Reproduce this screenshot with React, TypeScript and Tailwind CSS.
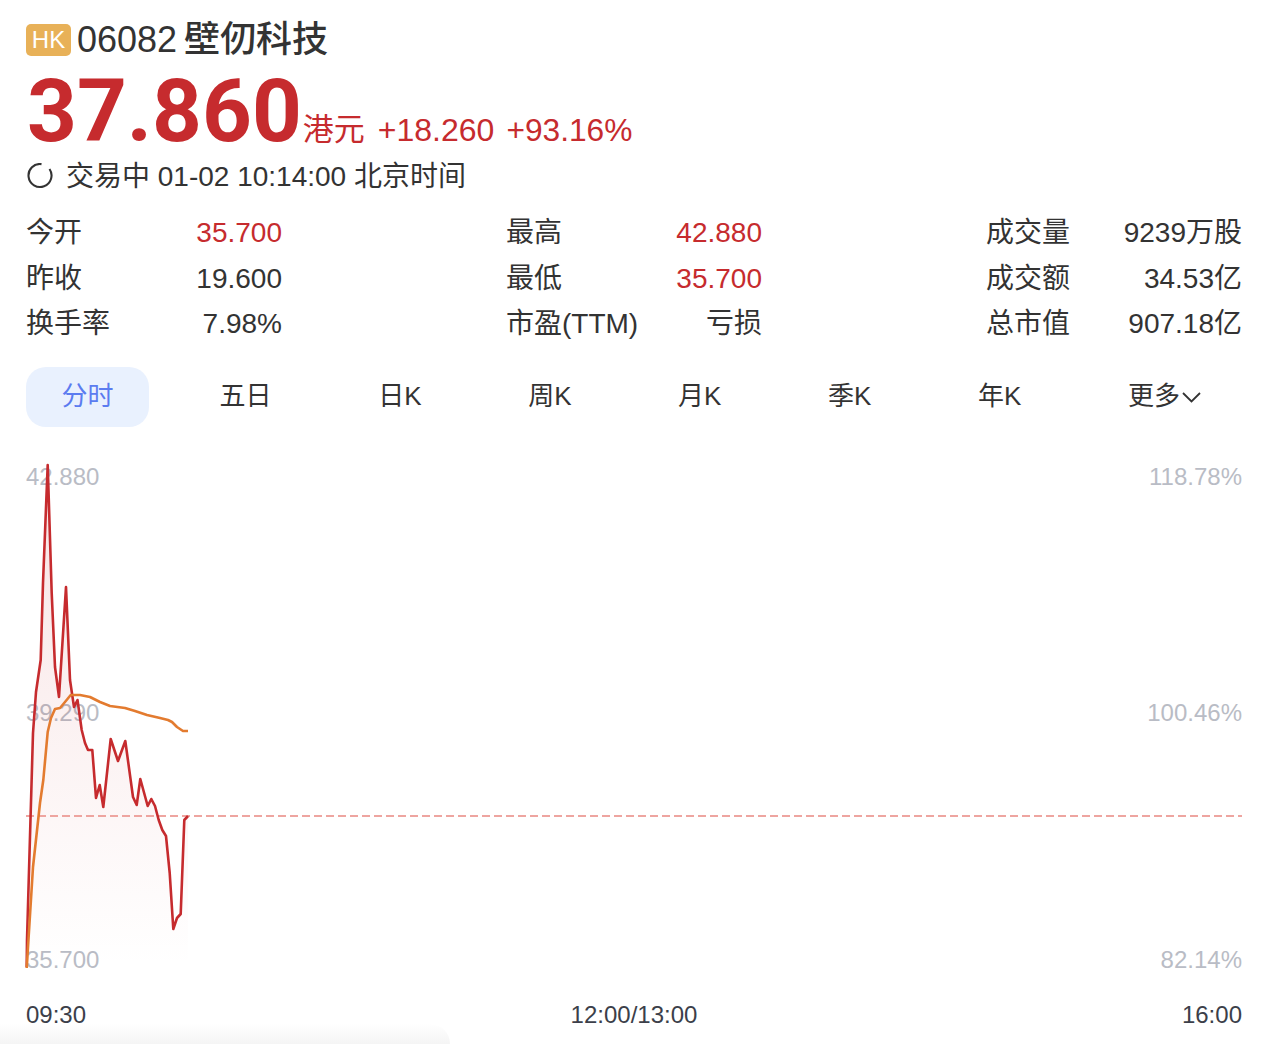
import React from 'react';

const FONT = "font-['Liberation_Sans','Noto_Sans_CJK_SC',sans-serif]";

const stats = [
  [
    { label: '今开', value: '35.700', color: 'text-[#c62b2e]' },
    { label: '昨收', value: '19.600', color: 'text-[#333333]' },
    { label: '换手率', value: '7.98%', color: 'text-[#333333]' },
  ],
  [
    { label: '最高', value: '42.880', color: 'text-[#c62b2e]' },
    { label: '最低', value: '35.700', color: 'text-[#c62b2e]' },
    { label: '市盈(TTM)', value: '亏损', color: 'text-[#333333]' },
  ],
  [
    { label: '成交量', value: '9239万股', color: 'text-[#333333]' },
    { label: '成交额', value: '34.53亿', color: 'text-[#333333]' },
    { label: '总市值', value: '907.18亿', color: 'text-[#333333]' },
  ],
];

const tabs = ['五日', '日K', '周K', '月K', '季K', '年K'];

const pricePoints =
  '26.7,967 27,940 33,733 36,692 40.7,660 43,583 47.7,465 51.7,593 55,667 59,697 66,587 70,680 74,707 77.5,700 81.7,730 85,743 88,750 92.3,750 96,798 99.7,785 103.3,807 110.7,739 118,761 125.3,741 133,797 136.7,805 140.3,779 147.7,806 151.3,799 155,806 158.7,820 162.3,830 166,836 169.7,873 173.3,929 177,918 180.7,914 184.3,820 188,816';

const avgPoints =
  '26.7,968 33,867 40,803 43.3,780 47.7,732 51,718 55,709 60,708 65,702 70.7,695 80,695 90,697 100,702 110,706 125,708 135,711 147,715 160,718 168,720 172,722 177,727 183,731 188,731';

const TimeChart = () => (
  <div className="relative mt-[33px] pl-[26px] pr-[28px]">
    <div className="flex justify-between text-[24px] leading-[34px] text-[#b9bcc5]">
      <span>42.880</span>
      <span>118.78%</span>
    </div>
    <div className="mt-[202px] flex justify-between text-[24px] leading-[34px] text-[#b9bcc5]">
      <span>39.290</span>
      <span>100.46%</span>
    </div>
    <div className="mt-[213px] flex justify-between text-[24px] leading-[34px] text-[#b9bcc5]">
      <span>35.700</span>
      <span>82.14%</span>
    </div>
    <svg className="absolute left-0 top-0" width="1270" height="520" viewBox="0 460 1270 520" fill="none">
      <defs>
        <linearGradient id="area" x1="0" y1="465" x2="0" y2="968" gradientUnits="userSpaceOnUse">
          <stop offset="0" stopColor="#c62b2e" stopOpacity="0.13" />
          <stop offset="1" stopColor="#c62b2e" stopOpacity="0" />
        </linearGradient>
      </defs>
      <polygon points={`${pricePoints} 188,968 26.7,968`} fill="url(#area)" />
      <line x1="26" y1="816" x2="1242" y2="816" stroke="#eea5a0" strokeWidth="2" strokeDasharray="8 4" />
      <polyline points={pricePoints} stroke="#c62b2e" strokeWidth="2.6" strokeLinejoin="round" />
      <polyline points={avgPoints} stroke="#e37b2f" strokeWidth="2.6" strokeLinejoin="round" />
    </svg>
  </div>
);

export default function App() {
  return (
    <div className={`${FONT} relative h-[1044px] w-[1270px] overflow-hidden bg-white pt-[16px] text-[#333333]`}>
      <div className="flex h-[48px] items-center px-[26px]">
        <span className="flex h-[32px] w-[45px] items-center justify-center rounded-[5px] bg-[#e8b158] text-[24px] text-white">
          HK
        </span>
        <span className="ml-[6px] text-[36px] leading-[48px]">06082</span>
        <span className="ml-[7px] text-[36px] font-medium leading-[48px]">壁仞科技</span>
      </div>

      <div className="mt-[5px] flex items-end pl-[27px] pr-[26px] text-[#c62b2e]">
        <span className="font-['Roboto',sans-serif] text-[87px] font-bold leading-[84px]">37.860</span>
        <span className="ml-[1px] pb-[1px] text-[31px] leading-[44px]">港元</span>
        <span className="ml-[13px] pb-[1px] text-[32px] leading-[44px]">+18.260</span>
        <span className="ml-[12px] pb-[1px] text-[31.7px] leading-[44px]">+93.16%</span>
      </div>

      <div className="mt-[4px] flex h-[40px] items-center px-[26px] text-[28px]">
        <svg width="28" height="28" viewBox="0 0 28 28" fill="none">
          <path d="M23.5 6 A11.5 11.5 0 1 1 15.5 1.1" stroke="#333333" strokeWidth="2.1" />
        </svg>
        <span className="ml-[12px]">交易中 01-02 10:14:00 北京时间</span>
      </div>

      <div className="mt-[13px] flex justify-between pl-[26px] pr-[28px] text-[28px] leading-[45.5px]">
        {stats.map((column, i) => (
          <div key={i} className="w-[256px]">
            {column.map((row) => (
              <div key={row.label} className="flex justify-between">
                <span>{row.label}</span>
                <span className={row.color}>{row.value}</span>
              </div>
            ))}
          </div>
        ))}
      </div>

      <div className="mt-[20px] flex items-center justify-between pl-[26px] pr-[32px] text-[26px]">
        <span className="flex h-[60px] items-center rounded-[20px] bg-[#e9f1fe] px-[35.5px] text-[#5b7cf0]">分时</span>
        {tabs.map((tab) => (
          <span key={tab} className="flex h-[60px] items-center px-[36px]">
            {tab}
          </span>
        ))}
        <span className="flex h-[60px] items-center px-[36px]">
          更多
          <svg width="21" height="12" viewBox="0 0 21 12" fill="none" className="ml-[1px]">
            <path d="M2 2 L10.5 10.5 L19 2" stroke="#333333" strokeWidth="1.8" />
          </svg>
        </span>
      </div>

      <TimeChart />

      <div className="mt-[21px] flex justify-between pl-[26px] pr-[28px] text-[24px] leading-[34px] text-[#3c3f4a]">
        <span>09:30</span>
        <span>12:00/13:00</span>
        <span>16:00</span>
      </div>

      {/* faint shadow along the bottom edge */}
      <div className="absolute bottom-0 left-0 h-[20px] w-[450px] rounded-tr-[20px] bg-gradient-to-b from-transparent to-[#f5f5f5]" />
    </div>
  );
}
